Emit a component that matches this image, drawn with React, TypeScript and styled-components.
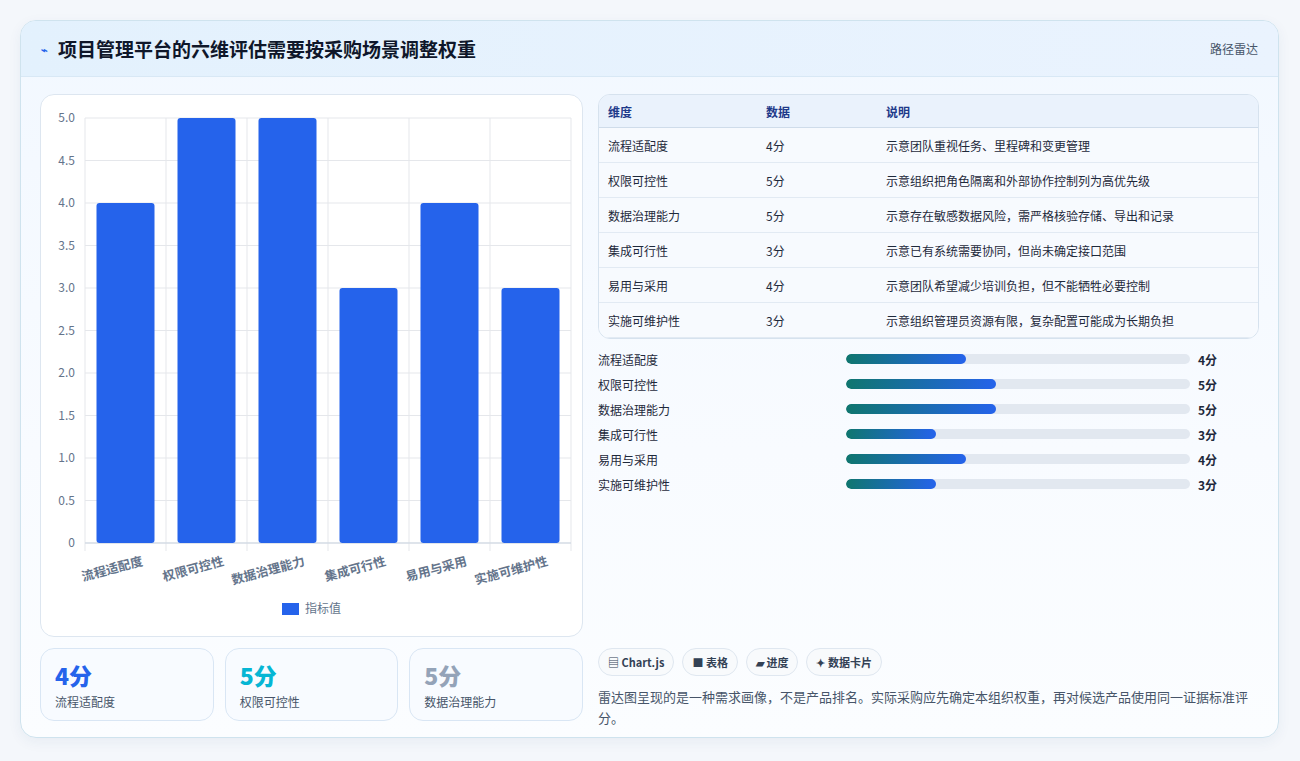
import React from "react";
import styled, { createGlobalStyle } from "styled-components";

const G = createGlobalStyle`
  html,body{margin:0;padding:0;background:#f4f7fb;}
  body{font-family:"Noto Sans CJK SC","Noto Sans",sans-serif;color:#1e293b;}
`;
const Page = styled.div`padding:20px 21px 21px 20px;`;
const Card = styled.div`
  background:linear-gradient(180deg,#f2f8ff 0%,#f8fbff 60%,#fbfdff 100%);
  border:1px solid #cfe3ee;border-radius:16px;overflow:hidden;height:718px;box-sizing:border-box;
  box-shadow:0 4px 14px rgba(30,60,120,0.06);
`;
const Header = styled.div`
  height:56px;display:flex;align-items:center;justify-content:space-between;padding:0 20px;
  background:linear-gradient(90deg,#e3f1fd,#eaf3fe);border-bottom:1px solid #d8e8f5;box-sizing:border-box;
`;
const Title = styled.h1`margin:0;font-size:19px;font-weight:700;color:#0f172a;display:flex;align-items:center;gap:10px;`;
const Bolt = styled.span`color:#2563eb;font-size:11px;`;
const Tag = styled.span`font-size:12px;color:#475569;`;
const Body = styled.div`display:flex;gap:15px;padding:17px 19px 0 19px;`;
const Left = styled.div`width:543px;display:flex;flex-direction:column;gap:11px;`;
const Right = styled.div`flex:1;display:flex;flex-direction:column;`;
const ChartCard = styled.div`height:543px;background:#fff;border:1px solid #dde6f0;border-radius:14px;box-sizing:border-box;overflow:hidden;`;
const Stats = styled.div`display:grid;grid-template-columns:repeat(3,1fr);gap:11px;`;
const Stat = styled.div`height:73px;border:1px solid #d9e6f4;border-radius:14px;background:#f8fbff;padding:12px 14px;box-sizing:border-box;`;
const StatVal = styled.div<{c:string}>`font-size:23px;font-weight:800;color:${p=>p.c};line-height:28px;`;
const StatLbl = styled.div`font-size:12px;color:#475569;margin-top:4px;`;
const Table = styled.table`width:100%;border-collapse:separate;border-spacing:0;border:1px solid #d6e2ee;border-radius:12px;overflow:hidden;font-size:12px;`;
const Th = styled.th`text-align:left;font-weight:600;color:#1e3a8a;background:#eaf2fc;height:32px;padding:0 9px;border-bottom:1px solid #cfdcea;`;
const Td = styled.td`height:34px;padding:0 9px;color:#1e293b;border-bottom:1px solid #e2eaf3;background:#f7fafe;`;
const Bars = styled.div`display:flex;flex-direction:column;gap:7px;margin-top:11px;`;
const BarRow = styled.div`display:grid;grid-template-columns:248px 344px 1fr;align-items:center;gap:0;height:18px;font-size:12px;`;
const Track = styled.div`height:10px;border-radius:5px;background:#e2e8f0;overflow:hidden;`;
const Fill = styled.div`height:100%;border-radius:5px;background:linear-gradient(90deg,#0f766e,#2563eb);`;
const BarVal = styled.span`font-weight:700;padding-left:8px;`;
const Chips = styled.div`display:flex;gap:8px;margin-top:auto;`;
const Chip = styled.span`font-size:11px;font-weight:600;color:#334155;border:1px solid #dfe7f0;background:#f8fafc;border-radius:14px;padding:5px 9px;`;
const Desc = styled.p`margin:10px 0 0;font-size:13px;line-height:21px;color:#475569;`;

const rows = [
  ["流程适配度",4,"示意团队重视任务、里程碑和变更管理"],
  ["权限可控性",5,"示意组织把角色隔离和外部协作控制列为高优先级"],
  ["数据治理能力",5,"示意存在敏感数据风险，需严格核验存储、导出和记录"],
  ["集成可行性",3,"示意已有系统需要协同，但尚未确定接口范围"],
  ["易用与采用",4,"示意团队希望减少培训负担，但不能牺牲必要控制"],
  ["实施可维护性",3,"示意组织管理员资源有限，复杂配置可能成为长期负担"],
] as const;

function Chart(){
  const x0=44,x1=530,y0=448,u=85;
  const slot=(x1-x0)/6;
  const f='"Noto Sans CJK SC",sans-serif';
  return (
    <svg width="541" height="541" style={{display:"block"}}>
      {[0,1,2,3,4,5,6,7,8,9,10].map(i=>{
        const y=y0-i*u/2;
        return <g key={i}>
          <line x1={x0} x2={x1} y1={y} y2={y} stroke="#e5e7eb"/>
          <text x={x0-10} y={y+4} fontSize="12" fill="#64748b" textAnchor="end" fontFamily={f}>{i===0?"0":(i/2).toFixed(1)}</text>
        </g>;
      })}
      {[0,1,2,3,4,5,6].map(i=><line key={i} x1={x0+i*slot} x2={x0+i*slot} y1={y0-5*u} y2={y0+8} stroke="#e5e7eb"/>)}
      <line x1={x0} x2={x1} y1={y0} y2={y0} stroke="#cbd5e1"/>
      {rows.map((r,i)=>{
        const cx=x0+slot*(i+0.5); const h=(r[1] as number)*u;
        return <g key={i}>
          <rect x={cx-29} y={y0-h} width={58} height={h} rx={3} fill="#2563eb"/>
          <text transform={`translate(${cx+18},${y0+22}) rotate(-15)`} fontSize="12.5" fill="#64748b" fontWeight="600" textAnchor="end" fontFamily={f}>{r[0]}</text>
        </g>;
      })}
      <rect x={241} y={508} width={17} height={12} fill="#2563eb"/>
      <text x={264} y={518} fontSize="12" fill="#64748b" fontFamily={f}>指标值</text>
    </svg>
  );
}

export default function App(){
  return <Page><G/>
    <Card>
      <Header><Title><Bolt>⌁</Bolt>项目管理平台的六维评估需要按采购场景调整权重</Title><Tag>路径雷达</Tag></Header>
      <Body>
        <Left>
          <ChartCard><Chart/></ChartCard>
          <Stats>
            <Stat><StatVal c="#2563eb">4分</StatVal><StatLbl>流程适配度</StatLbl></Stat>
            <Stat><StatVal c="#06b6d4">5分</StatVal><StatLbl>权限可控性</StatLbl></Stat>
            <Stat><StatVal c="#94a3b8">5分</StatVal><StatLbl>数据治理能力</StatLbl></Stat>
          </Stats>
        </Left>
        <Right>
          <Table>
            <thead><tr><Th style={{width:140}}>维度</Th><Th style={{width:102}}>数据</Th><Th>说明</Th></tr></thead>
            <tbody>{rows.map((r,i)=><tr key={i}><Td>{r[0]}</Td><Td>{r[1]}分</Td><Td>{r[2]}</Td></tr>)}</tbody>
          </Table>
          <Bars>{rows.map((r,i)=><BarRow key={i}><span>{r[0]}</span><Track><Fill style={{width:`${(r[1] as number)*8.72}%`}}/></Track><BarVal>{r[1]}分</BarVal></BarRow>)}</Bars>
          <Chips style={{marginTop:155}}><Chip>▤ Chart.js</Chip><Chip>■ 表格</Chip><Chip>▰ 进度</Chip><Chip>✦ 数据卡片</Chip></Chips>
          <Desc>雷达图呈现的是一种需求画像，不是产品排名。实际采购应先确定本组织权重，再对候选产品使用同一证据标准评分。</Desc>
        </Right>
      </Body>
    </Card>
  </Page>;
}
